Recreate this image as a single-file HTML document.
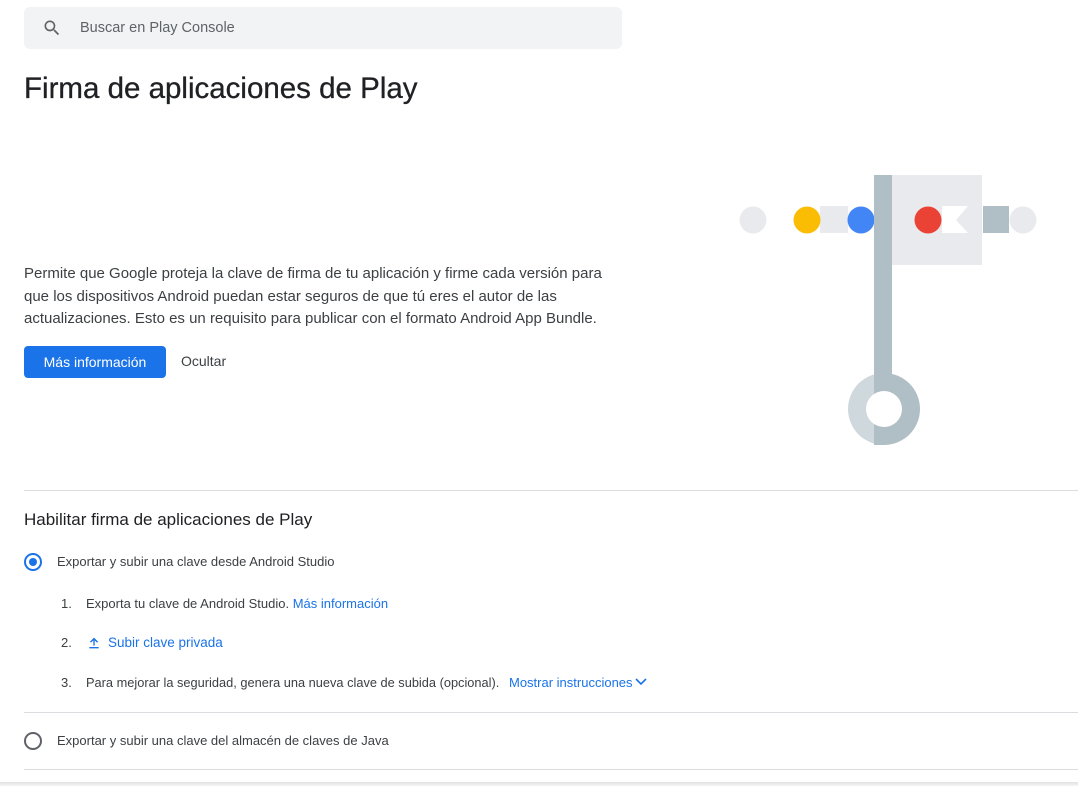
<!DOCTYPE html>
<html><head><meta charset="utf-8"><style>
*{margin:0;padding:0;box-sizing:border-box}
body{width:1078px;height:786px;overflow:hidden;background:#fff;font-family:"Liberation Sans",Arial,sans-serif;color:#202124;position:relative}
.abs{position:absolute}
.search{left:24px;top:7px;width:598px;height:42px;background:#f1f3f4;border-radius:6px}
.search span{position:absolute;left:56px;top:13px;font-size:14.5px;color:#5f6368}
.p{left:24px;top:263px;width:590px;font-size:15px;line-height:22.5px;color:#3c4043}
.btn{left:24px;top:346px;width:142px;height:32px;background:#1a73e8;color:#fff;border-radius:4px;font-size:14px;text-align:center;line-height:32px}
.hide{left:181px;top:353px;font-size:14px;color:#3c4043}
.hr{left:24px;right:0;height:1px;background:#dadce0}
.t{font-size:13px;color:#3c4043;white-space:nowrap}
.link{color:#1a73e8}
.radio{width:18px;height:18px;border-radius:50%;border:2px solid #5f6368}
</style></head><body>
<div class="abs search">
<svg class="abs" style="left:18px;top:11px" width="20" height="20" viewBox="0 0 24 24"><path fill="#5f6368" d="M15.5 14h-.79l-.28-.27A6.47 6.47 0 0016 9.5 6.5 6.5 0 109.5 16c1.61 0 3.09-.59 4.23-1.57l.27.28v.79l5 4.99L20.49 19l-4.99-5zm-6 0C7.01 14 5 11.99 5 9.5S7.01 5 9.5 5 14 7.01 14 9.5 11.99 14 9.5 14z"/></svg>
<span>Buscar en Play Console</span></div>
<div class="abs" style="left:24px;top:72px;font-size:29.5px;white-space:nowrap;-webkit-text-stroke:0.3px #202124">Firma de aplicaciones de Play</div>
<div class="abs p">Permite que Google proteja la clave de firma de tu aplicación y firme cada versión para que los dispositivos Android puedan estar seguros de que tú eres el autor de las actualizaciones. Esto es un requisito para publicar con el formato Android App Bundle.</div>
<div class="abs btn">Más información</div>
<div class="abs hide">Ocultar</div>
<svg class="abs" style="left:0;top:0" width="1078" height="460">
<circle cx="753" cy="220" r="13.5" fill="#e8eaed"/>
<rect x="820" y="206" width="28" height="27" fill="#e8eaed"/>
<circle cx="807" cy="220" r="13.5" fill="#fbbc04"/>
<circle cx="861" cy="220" r="13.5" fill="#4285f4"/>
<rect x="892" y="175" width="90" height="90" fill="#e8eaed"/>
<rect x="874" y="175" width="18" height="215" fill="#b0bec5"/>
<circle cx="928" cy="220" r="13.5" fill="#ea4335"/>
<path d="M942 206H968L956 220L968 233H942Z" fill="#fff"/>
<rect x="983" y="206" width="26" height="27" fill="#b0bec5"/>
<circle cx="1023" cy="220" r="13.5" fill="#e8eaed"/>
<path d="M884 373A36 36 0 0 0 884 445Z" fill="#cfd8dc"/>
<path d="M884 373A36 36 0 0 1 884 445Z" fill="#b0bec5"/>
<rect x="874" y="373" width="10" height="72" fill="#b0bec5"/>
<circle cx="884" cy="409" r="18" fill="#fff"/>
</svg>
<div class="abs hr" style="top:490px"></div>
<div class="abs" style="left:24px;top:510px;font-size:17px">Habilitar firma de aplicaciones de Play</div>
<div class="abs radio" style="left:24px;top:553px;border-color:#1a73e8"><div style="width:8px;height:8px;border-radius:50%;background:#1a73e8;margin:3px"></div></div>
<div class="abs t" style="left:57px;top:554px">Exportar y subir una clave desde Android Studio</div>
<div class="abs t" style="left:61px;top:596px">1.</div>
<div class="abs t" style="left:86px;top:596px">Exporta tu clave de Android Studio. <span class="link">Más información</span></div>
<div class="abs t" style="left:61px;top:635px">2.</div>
<svg class="abs" style="left:86px;top:635px" width="16" height="16" viewBox="0 0 24 24"><path fill="#1a73e8" d="M5 18h14v2H5zM11 16h2V8l3.6 3.6L18 10l-6-6-6 6 1.4 1.4L11 8z"/></svg>
<div class="abs t link" style="left:108px;top:635px;font-size:13.5px">Subir clave privada</div>
<div class="abs t" style="left:61px;top:675px">3.</div>
<div class="abs t" style="left:86px;top:675px;font-size:12.8px">Para mejorar la seguridad, genera una nueva clave de subida (opcional).</div>
<div class="abs t link" style="left:509px;top:675px">Mostrar instrucciones<svg width="12" height="10" viewBox="0 0 12 10" style="margin-left:2px"><path d="M1 2l5 5 5-5" stroke="#1a73e8" stroke-width="1.6" fill="none"/></svg></div>
<div class="abs hr" style="top:712px"></div>
<div class="abs radio" style="left:24px;top:732px"></div>
<div class="abs t" style="left:57px;top:733px">Exportar y subir una clave del almacén de claves de Java</div>
<div class="abs hr" style="top:769px"></div>
<div class="abs" style="left:0;right:0;top:782px;height:4px;background:linear-gradient(#e0e0e0,#f5f5f5)"></div>
</body></html>
